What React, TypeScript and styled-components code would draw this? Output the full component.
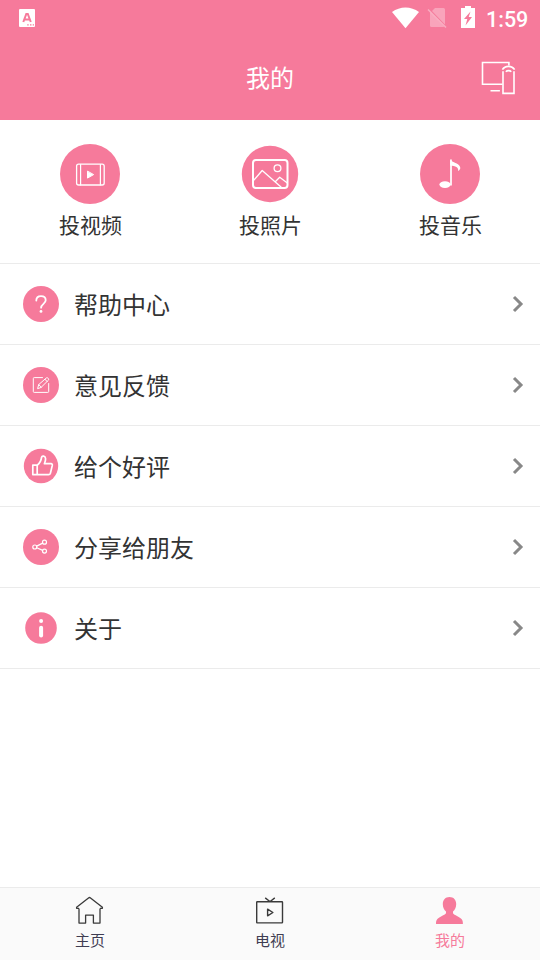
import React from 'react';
import styled, { createGlobalStyle } from 'styled-components';

const PINK = '#f67a9b';

const GlobalStyle = createGlobalStyle`
  * { box-sizing: border-box; }
  body { margin: 0; background: #fff; font-family: "Noto Sans CJK SC", sans-serif; }
  svg { display: block; flex: none; }
`;

const Screen = styled.div`
  width: 540px;
  height: 960px;
  display: flex;
  flex-direction: column;
  background: #fff;
  overflow: hidden;
`;

const StatusBar = styled.div`
  height: 36px;
  flex: none;
  display: flex;
  align-items: center;
  justify-content: space-between;
  padding: 0 12px 0 18px;
  background: ${PINK};
  color: #fff;
`;

const StatusGroup = styled.div`
  display: flex;
  align-items: center;
`;

const SimSlot = styled.span`
  margin: 0 13px 0 6px;
`;

const BatterySlot = styled.span`
  padding-bottom: 2px;
`;

const Clock = styled.span`
  width: 42px;
  margin-left: 11px;
  padding-top: 3px;
  font: 500 21.5px/36px Roboto, sans-serif;
  white-space: nowrap;
`;

const Header = styled.header`
  height: 84px;
  flex: none;
  display: grid;
  grid-template-columns: 60px 1fr 60px;
  align-items: center;
  padding: 0 12px;
  background: ${PINK};
  color: #fff;
`;

const Title = styled.h1`
  grid-column: 2;
  margin: 0;
  padding-bottom: 2px;
  font-size: 24px;
  font-weight: 400;
  line-height: 36px;
  text-align: center;
`;

const CastButton = styled.div`
  justify-self: end;
  padding-right: 11px;
`;

const Tiles = styled.div`
  height: 144px;
  flex: none;
  display: grid;
  grid-template-columns: repeat(3, 1fr);
  padding-top: 24px;
  border-bottom: 1px solid #ebebeb;
`;

const Tile = styled.div`
  display: flex;
  flex-direction: column;
  align-items: center;
`;

const TileLabel = styled.span`
  margin-top: 4px;
  padding-left: 1px;
  font-size: 21px;
  line-height: 32px;
  color: #333;
`;

const Row = styled.div`
  height: 81px;
  flex: none;
  display: flex;
  align-items: center;
  padding: 0 16px 0 23px;
  border-bottom: 1px solid #ebebeb;
`;

const RowLabel = styled.span`
  flex: 1;
  margin-left: 15px;
  font-size: 24px;
  line-height: 36px;
  color: #333;
`;

const TabBar = styled.nav`
  height: 73px;
  flex: none;
  margin-top: auto;
  display: grid;
  grid-template-columns: repeat(3, 1fr);
  border-top: 1px solid #ebebeb;
  background: #fafafa;
`;

const Tab = styled.div<{ $active?: boolean }>`
  display: flex;
  flex-direction: column;
  align-items: center;
  padding-top: 8px;
  font-size: 15px;
  line-height: 22px;
  color: ${(p) => (p.$active ? PINK : '#3f3d52')};
`;

const TabLabel = styled.span`
  margin-top: 3px;
`;

const Disc = ({ size, r, children }: { size: number; r: number; children: React.ReactNode }) => (
  <svg width={size} height={size} viewBox={`0 0 ${size} ${size}`} fill="none" stroke="#fff" strokeLinejoin="round" strokeLinecap="round">
    <circle cx={size / 2} cy={size / 2} r={r} fill={PINK} stroke="none" />
    {children}
  </svg>
);

const tiles = [
  {
    label: '投视频',
    icon: (
      <Disc size={60} r={30}>
        <rect x="16.6" y="20.2" width="27.6" height="20.8" rx="2" strokeWidth="1.3" />
        <path d="M20.6 20.5v20.5M40.4 20.5v20.5" strokeWidth="1.2" />
        <path d="M27.5 27.500v6.600l5.800-3.300z" fill="#fff" strokeWidth="1" />
      </Disc>
    ),
  },
  {
    label: '投照片',
    icon: (
      <Disc size={60} r={28.2}>
        <rect x="13" y="16" width="34.5" height="28" rx="3" strokeWidth="2" />
        <circle cx="37.5" cy="24.3" r="3.4" strokeWidth="1.3" />
        <path d="M13.5 36.5L22.2 26.5 41 43M35.5 37.5l4.2-4.2 7.3 5.5" strokeWidth="1.3" />
      </Disc>
    ),
  },
  {
    label: '投音乐',
    icon: (
      <Disc size={60} r={30}>
        <ellipse cx="25" cy="40.6" rx="5.6" ry="3.3" fill="#fff" stroke="none" />
        <path d="M31 15.5v26" strokeWidth="1.7" strokeLinecap="butt" />
        <path d="M30.2 15.5c1.8 3.5 9.2 3.1 10.1 8.2.1 1.3-.9 2.6-2.2 3.2.8-3-2.6-5.1-7.9-5.3z" fill="#fff" stroke="none" />
      </Disc>
    ),
  },
];

const rows = [
  {
    label: '帮助中心',
    icon: (
      <Disc size={36} r={18}>
        <path d="M13.3 14.6c0-2.8 2-4.4 4.7-4.4s4.7 1.6 4.7 4.1c0 3.4-4.6 3.7-4.6 7.4" strokeWidth="1.8" />
        <circle cx="18" cy="25.4" r="1.4" fill="#fff" stroke="none" />
      </Disc>
    ),
  },
  {
    label: '意见反馈',
    icon: (
      <Disc size={36} r={18}>
        <path d="M19.5 10.6h-8.3q-.9 0-.9.9v13q0 .9.9.9h13.6q.9 0 .9-.9v-8" strokeWidth="1" />
        <path d="M14.7 21.3l1-3.7 7.7-6.7q1-.5 1.8.4t.3 1.8l-7.2 7.1zM15.7 17.6l2.6 2.6M22 12.3l2.2 2.3" strokeWidth="1" />
      </Disc>
    ),
  },
  {
    label: '给个好评',
    icon: (
      <Disc size={36} r={17.2}>
        <path d="M9.8 17.2h4.4v9.4H9.8zM14.2 17.2c3.2-2.2 4-4.6 4.4-8 .5-1.8 3.9-1.5 4 1.6 0 2-.7 3.4-1.2 4.9H28q1.6.2 1.3 1.7l-1.9 7.8q-.4 1.4-1.8 1.4H14.2" strokeWidth="1.7" />
      </Disc>
    ),
  },
  {
    label: '分享给朋友',
    icon: (
      <Disc size={36} r={18}>
        <g strokeWidth="1.2">
          <circle cx="11.8" cy="18" r="2" />
          <circle cx="21.5" cy="13.2" r="2" />
          <circle cx="21.5" cy="22.1" r="2" />
          <path d="M13.7 17.1l6-3M13.7 18.8l6 2.6" />
        </g>
      </Disc>
    ),
  },
  {
    label: '关于',
    icon: (
      <Disc size={36} r={15.8}>
        <circle cx="18.1" cy="11.1" r="2" fill="#fff" stroke="none" />
        <path d="M18.1 17.8v7.7" strokeWidth="4" />
      </Disc>
    ),
  },
];

const tabs = [
  {
    label: '主页',
    icon: (
      <svg width="30" height="30" viewBox="0 0 30 30" fill="none" stroke="#3a3a3a" strokeWidth="1.3" strokeLinejoin="round">
        <path d="M4 12.600v14.500h6.600v-8h7.800v8H25V12.600M4 12.300H1.600V11.200L13.500 1.900q1-.8 2 0l11.900 9.300v1.100H25" />
      </svg>
    ),
  },
  {
    label: '电视',
    icon: (
      <svg width="30" height="30" viewBox="0 0 30 30" fill="none" stroke="#3a3a3a" strokeWidth="1.4" strokeLinejoin="round">
        <rect x="1.7" y="5.7" width="25.8" height="21.2" rx=".6" />
        <path d="M10.2 1.9l4.3 3.3h1l4.3-3.300M12.600 13.200v6.600l5.300-3.300z" />
      </svg>
    ),
  },
  {
    label: '我的',
    icon: (
      <svg width="30" height="30" viewBox="0 0 30 30" fill={PINK}>
        <path d="M14.5 1c4.1 0 6.7 2.8 6.7 7 0 3.4-1.4 6-3.2 7.6v1.6c1.3 2 6.5 3.5 8.5 5.8 1.1 1.2 1.4 2.5 1.4 5H1c0-2.5.3-3.8 1.4-5 2-2.3 7.2-3.8 8.6-5.8v-1.6C9.2 14 7.8 11.4 7.8 8c0-4.2 2.6-7 6.7-7z" />
      </svg>
    ),
    active: true,
  },
];

const KeyboardIcon = () => (
  <svg width="18" height="18" viewBox="0 0 18 18">
    <rect x="1" y="0" width="16" height="18" rx="1" fill="#fff" />
    <path d="M5.3 13L8.3 5h1.500l3 8M6.500 10.500h5.200" fill="none" stroke={PINK} strokeWidth="2" />
    <path d="M9.2 15.8h1.500M12 15.800h1.500M14.700 15.800h1.300" stroke={PINK} strokeWidth="1.3" />
  </svg>
);

const WifiIcon = () => (
  <svg width="28" height="22" viewBox="0 0 28 22">
    <path d="M0 5C8-1 19-1 27 5L13.500 21.300z" fill="#fff" />
  </svg>
);

const NoSimIcon = () => (
  <svg width="22" height="22" viewBox="0 0 22 22">
    <path d="M9 1h8.5q1.5 0 1.5 1.500v15L6 4zM4.300 5.500L18 19.500q-.5.500-1 .5H5.500Q4 20 4 18.500V6z" fill="#fff" opacity=".32" />
    <path d="M2 2.500l18 18" stroke="#fff" opacity=".38" strokeWidth="1.6" />
  </svg>
);

const BatteryIcon = () => (
  <svg width="14" height="22" viewBox="0 0 14 22">
    <path d="M4 0h6v2h4v20H0V2h4z" fill="#fff" />
    <path d="M9.500 5.500L3 13h3.300l-1.800 6.500L11 11H7.700z" fill={PINK} />
  </svg>
);

const CastIcon = () => (
  <svg width="36" height="34" viewBox="0 0 36 34" fill="none" stroke="#fff" strokeWidth="1.6">
    <path d="M21.500 23.200H1.500V1.500h26.400v3.100M9.500 29.800h9.400" />
    <path d="M22 10.200v22.200h11V10.200M21.400 8.700c2.600-4.400 9.500-4.400 12.200 0M24.800 10.700c1.400-1.400 4.100-1.400 5.500 0" />
  </svg>
);

const Chevron = () => (
  <svg width="12" height="18" viewBox="0 0 12 18" fill="none" stroke="#888" strokeWidth="3">
    <path d="M2 2L9 9l-7 7" />
  </svg>
);

export default function App() {
  return (
    <Screen>
      <GlobalStyle />
      <StatusBar>
        <KeyboardIcon />
        <StatusGroup>
          <WifiIcon />
          <SimSlot><NoSimIcon /></SimSlot>
          <BatterySlot><BatteryIcon /></BatterySlot>
          <Clock>1:59</Clock>
        </StatusGroup>
      </StatusBar>
      <Header>
        <Title>我的</Title>
        <CastButton><CastIcon /></CastButton>
      </Header>
      <Tiles>
        {tiles.map((t) => (
          <Tile key={t.label}>
            {t.icon}
            <TileLabel>{t.label}</TileLabel>
          </Tile>
        ))}
      </Tiles>
      {rows.map((r) => (
        <Row key={r.label}>
          {r.icon}
          <RowLabel>{r.label}</RowLabel>
          <Chevron />
        </Row>
      ))}
      <TabBar>
        {tabs.map((t) => (
          <Tab key={t.label} $active={t.active}>
            {t.icon}
            <TabLabel>{t.label}</TabLabel>
          </Tab>
        ))}
      </TabBar>
    </Screen>
  );
}
